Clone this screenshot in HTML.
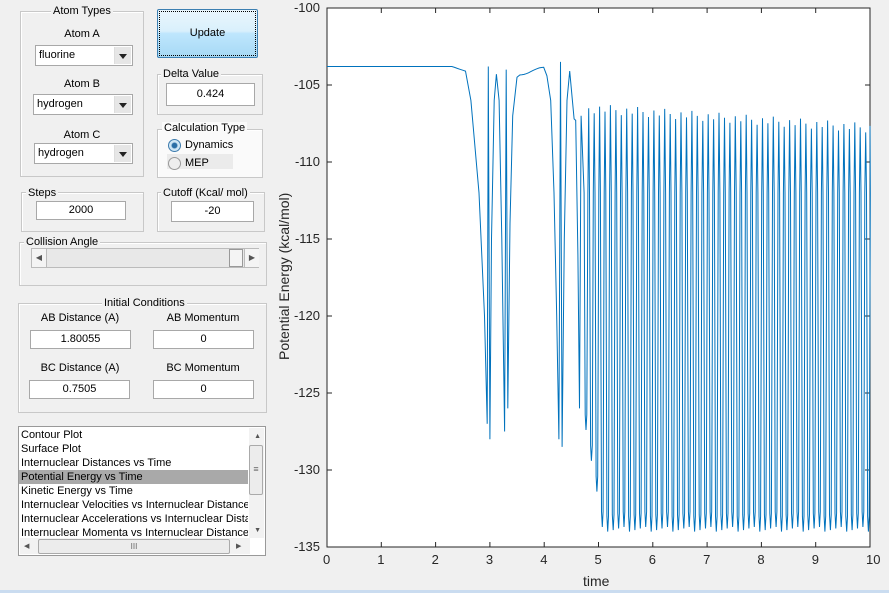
<!DOCTYPE html>
<html><head><meta charset="utf-8"><style>
body{margin:0;width:889px;height:593px;background:#f0f0f0;font-family:"Liberation Sans",Arial,sans-serif;font-size:11px;color:#000;position:relative;overflow:hidden}
.a{position:absolute}
.fr{position:absolute;border:1px solid #c8c8c8;box-shadow:1px 1px 0 #fff inset}
.ft{position:absolute;background:#f0f0f0;padding:0 2px;white-space:nowrap}
.in{position:absolute;background:#fff;border:1px solid #a8a8a8;text-align:center;box-sizing:border-box}
.sel{position:absolute;background:#fff;border:1px solid #a8a8a8;box-sizing:border-box;padding-left:3px;line-height:19px}
.sel b{position:absolute;right:1px;top:1px;bottom:1px;width:16px;background:#e6e6e6;border-left:1px solid #ddd}
.sel b:after{content:"";position:absolute;left:4px;top:7px;border-left:4px solid transparent;border-right:4px solid transparent;border-top:5px solid #222}
.tk{position:absolute;font-size:13px;color:#262626}
</style></head><body>
<div class="fr" style="left:20px;top:11px;width:122px;height:164px"></div>
<div class="ft" style="left:51px;top:5px">Atom Types</div>
<div class="a" style="left:20px;top:28px;width:124px;text-align:center">Atom A</div>
<div class="sel" style="left:35px;top:45px;width:98px;height:21px">fluorine<b></b></div>
<div class="a" style="left:20px;top:78px;width:124px;text-align:center">Atom B</div>
<div class="sel" style="left:33px;top:94px;width:100px;height:21px">hydrogen<b></b></div>
<div class="a" style="left:20px;top:129px;width:124px;text-align:center">Atom C</div>
<div class="sel" style="left:34px;top:143px;width:99px;height:21px">hydrogen<b></b></div>
<div class="a" style="left:157px;top:9px;width:101px;height:49px;box-sizing:border-box;border:1px solid #3c7fb1;border-radius:2px;background:linear-gradient(#eaf6fd,#d9f0fc 45%,#bee6fd 50%,#a7d9f5);outline:1px dotted #000;outline-offset:-3px;text-align:center;line-height:47px">Update</div>
<div class="fr" style="left:157px;top:74px;width:104px;height:39px"></div>
<div class="ft" style="left:161px;top:68px">Delta Value</div>
<div class="in" style="left:166px;top:83px;width:89px;height:23px;line-height:21px">0.424</div>
<div class="fr" style="left:157px;top:129px;width:104px;height:47px;background:#fafafa"></div>
<div class="ft" style="left:162px;top:122px;background:#fafafa">Calculation Type</div>
<div class="a" style="left:167px;top:154px;width:66px;height:15px;background:#ebebeb"></div>
<div class="a" style="left:168px;top:139px;width:11px;height:11px;border-radius:50%;border:1px solid #3d7bad;background:radial-gradient(#2a6ea6 30%,#cfe6f5 45%)"></div>
<div class="a" style="left:185px;top:139px">Dynamics</div>
<div class="a" style="left:168px;top:157px;width:11px;height:11px;border-radius:50%;border:1px solid #999;background:#eee"></div>
<div class="a" style="left:185px;top:157px">MEP</div>
<div class="fr" style="left:21px;top:192px;width:121px;height:38px"></div>
<div class="ft" style="left:26px;top:187px">Steps</div>
<div class="in" style="left:36px;top:201px;width:90px;height:19px;line-height:17px">2000</div>
<div class="fr" style="left:157px;top:192px;width:106px;height:38px"></div>
<div class="ft" style="left:161px;top:187px">Cutoff (Kcal/ mol)</div>
<div class="in" style="left:171px;top:201px;width:83px;height:21px;line-height:19px">-20</div>
<div class="fr" style="left:19px;top:242px;width:246px;height:42px"></div>
<div class="ft" style="left:24px;top:236px">Collision Angle</div>
<div class="a" style="left:31px;top:248px;width:228px;height:20px;background:#e8e8e8;border:1px solid #bbb;box-sizing:border-box"></div>
<div class="a" style="left:32px;top:249px;width:14px;height:18px;background:#f4f4f4;border-right:1px solid #bbb;font-size:8px;line-height:18px;text-align:center;color:#555">◀</div>
<div class="a" style="left:229px;top:249px;width:14px;height:18px;background:#f4f4f4;border:1px solid #999;box-sizing:border-box"></div>
<div class="a" style="left:244px;top:249px;width:14px;height:18px;background:#f4f4f4;border-left:1px solid #bbb;font-size:8px;line-height:18px;text-align:center;color:#555">▶</div>
<div class="fr" style="left:18px;top:303px;width:247px;height:108px"></div>
<div class="ft" style="left:102px;top:297px">Initial Conditions</div>
<div class="a" style="left:30px;top:312px;width:100px;text-align:center">AB Distance (A)</div>
<div class="a" style="left:153px;top:312px;width:100px;text-align:center">AB Momentum</div>
<div class="in" style="left:30px;top:330px;width:101px;height:19px;line-height:17px">1.80055</div>
<div class="in" style="left:153px;top:330px;width:101px;height:19px;line-height:17px">0</div>
<div class="a" style="left:30px;top:362px;width:100px;text-align:center">BC Distance (A)</div>
<div class="a" style="left:153px;top:362px;width:100px;text-align:center">BC Momentum</div>
<div class="in" style="left:29px;top:380px;width:101px;height:19px;line-height:17px">0.7505</div>
<div class="in" style="left:153px;top:380px;width:101px;height:19px;line-height:17px">0</div>
<div class="a" style="left:18px;top:426px;width:248px;height:130px;background:#fff;border:1px solid #999;box-sizing:border-box;overflow:hidden;line-height:14px">
<div style="padding-left:2px;padding-top:1px;white-space:nowrap;width:227px;overflow:hidden">Contour Plot<br>Surface Plot<br>Internuclear Distances vs Time<br><span style="display:block;background:#a9a9a9;margin-left:-2px;padding-left:2px">Potential Energy vs Time</span>Kinetic Energy vs Time<br>Internuclear Velocities vs Internuclear Distance<br>Internuclear Accelerations vs Internuclear Distances<br>Internuclear Momenta vs Internuclear Distance</div>
<div class="a" style="right:1px;top:1px;width:15px;height:110px;background:#f2f2f2"></div>
<div class="a" style="right:2px;top:18px;width:12px;height:48px;background:#ececec;border:1px solid #aaa;border-radius:2px;text-align:center;line-height:46px;color:#666;font-size:9px">≡</div>
<div class="a" style="right:4px;top:3px;font-size:7px;color:#555">▲</div>
<div class="a" style="right:4px;top:97px;font-size:7px;color:#555">▼</div>
<div class="a" style="left:1px;top:111px;width:230px;height:16px;background:#f2f2f2"></div>
<div class="a" style="left:19px;top:112px;width:190px;height:13px;background:#ececec;border:1px solid #aaa;border-radius:2px;text-align:center;font-size:8px;line-height:13px;color:#666">III</div>
<div class="a" style="left:5px;top:113px;font-size:7px;color:#555">◀</div>
<div class="a" style="left:217px;top:113px;font-size:7px;color:#555">▶</div>
</div>
<div class="a" style="left:0;top:590px;width:889px;height:3px;background:#cadcf0"></div>
<svg class="a" style="left:0;top:0" width="889" height="593">
<rect x="327" y="8" width="543" height="539" fill="#fff" stroke="#262626" stroke-width="1"/>
<g id="ticks" stroke="#262626" stroke-width="1"></g>
<path id="curve" fill="none" stroke="#0072bd" stroke-width="1"/>
</svg>
<div class="a" style="left:248px;top:270px;width:0;height:0"><div style="position:absolute;transform:rotate(-90deg);transform-origin:0 0;left:28px;top:90px;white-space:nowrap;font-size:14px;color:#262626">Potential Energy (kcal/mol)</div></div>
<div class="a" style="left:583px;top:573px;font-size:14px;color:#262626">time</div>
<div id="lbl"></div>
<script>
(function(){
var X=function(t){return 327+t*54.3},Y=function(e){return 8+(-100-e)*15.4};
var tk=document.getElementById('ticks'),lb=document.getElementById('lbl'),h='',s='';
for(var i=0;i<=10;i++){var x=X(i);s+='<line x1="'+x+'" y1="547" x2="'+x+'" y2="542"/><line x1="'+x+'" y1="8" x2="'+x+'" y2="13"/>';h+='<div class="tk" style="left:'+(x-4)+'px;top:552px">'+i+'</div>';}
for(var e=-100;e>=-135;e-=5){var y=Y(e);s+='<line x1="327" y1="'+y+'" x2="332" y2="'+y+'"/><line x1="870" y1="'+y+'" x2="865" y2="'+y+'"/>';h+='<div class="tk" style="left:284px;width:36px;text-align:right;top:'+(y-8)+'px">'+e+'</div>';}
tk.innerHTML=s;lb.innerHTML=h;
var P=[];function p(t,e){P.push(X(t).toFixed(1)+','+Y(e).toFixed(1));}
for(var t=0;t<=2.55;t+=0.05)p(t,-103.8-(t>2.3?(t-2.3)*1.2:0));
[[2.65,-106],[2.8,-112],[2.9,-120],[2.95,-127],[2.97,-103.8],[3.0,-128],[3.03,-115],[3.08,-106],[3.12,-104.3],[3.17,-106],[3.22,-115],[3.27,-127.5],[3.3,-104],[3.33,-126],[3.37,-114],[3.42,-107],[3.5,-104.5]].forEach(function(a){p(a[0],a[1])});
for(var t=3.55;t<=4.0;t+=0.04)p(t,-104.1+0.25*Math.sin(t*150));
[[4.05,-104.4],[4.12,-106],[4.18,-112],[4.23,-120],[4.27,-128],[4.3,-103.5],[4.33,-128.5],[4.37,-115],[4.42,-106],[4.47,-104.1],[4.52,-106],[4.55,-107.2],[4.58,-107.3],[4.62,-116],[4.65,-126],[4.68,-107]].forEach(function(a){p(a[0],a[1])});
var T=0.1,k=0;
for(var n=0;n<53;n++){var t=4.72+n*T;k++;var tp=-106.2-Math.min(1.5,(t-4.7)*0.25)-((k*7)%5)*0.15;var bt=-133.7-((k*3)%4)*0.1;if(t<5)bt=-127-(t-4.7)*20;
p(t+T*0.15,-112);p(t+T*0.35,bt+1);p(t+T*0.5,bt);p(t+T*0.65,bt+1);p(t+T*0.85,-112);p(Math.min(10,t+T),tp);}
document.getElementById('curve').setAttribute('d','M'+P.join(' L'));
})();
</script>
</body></html>
